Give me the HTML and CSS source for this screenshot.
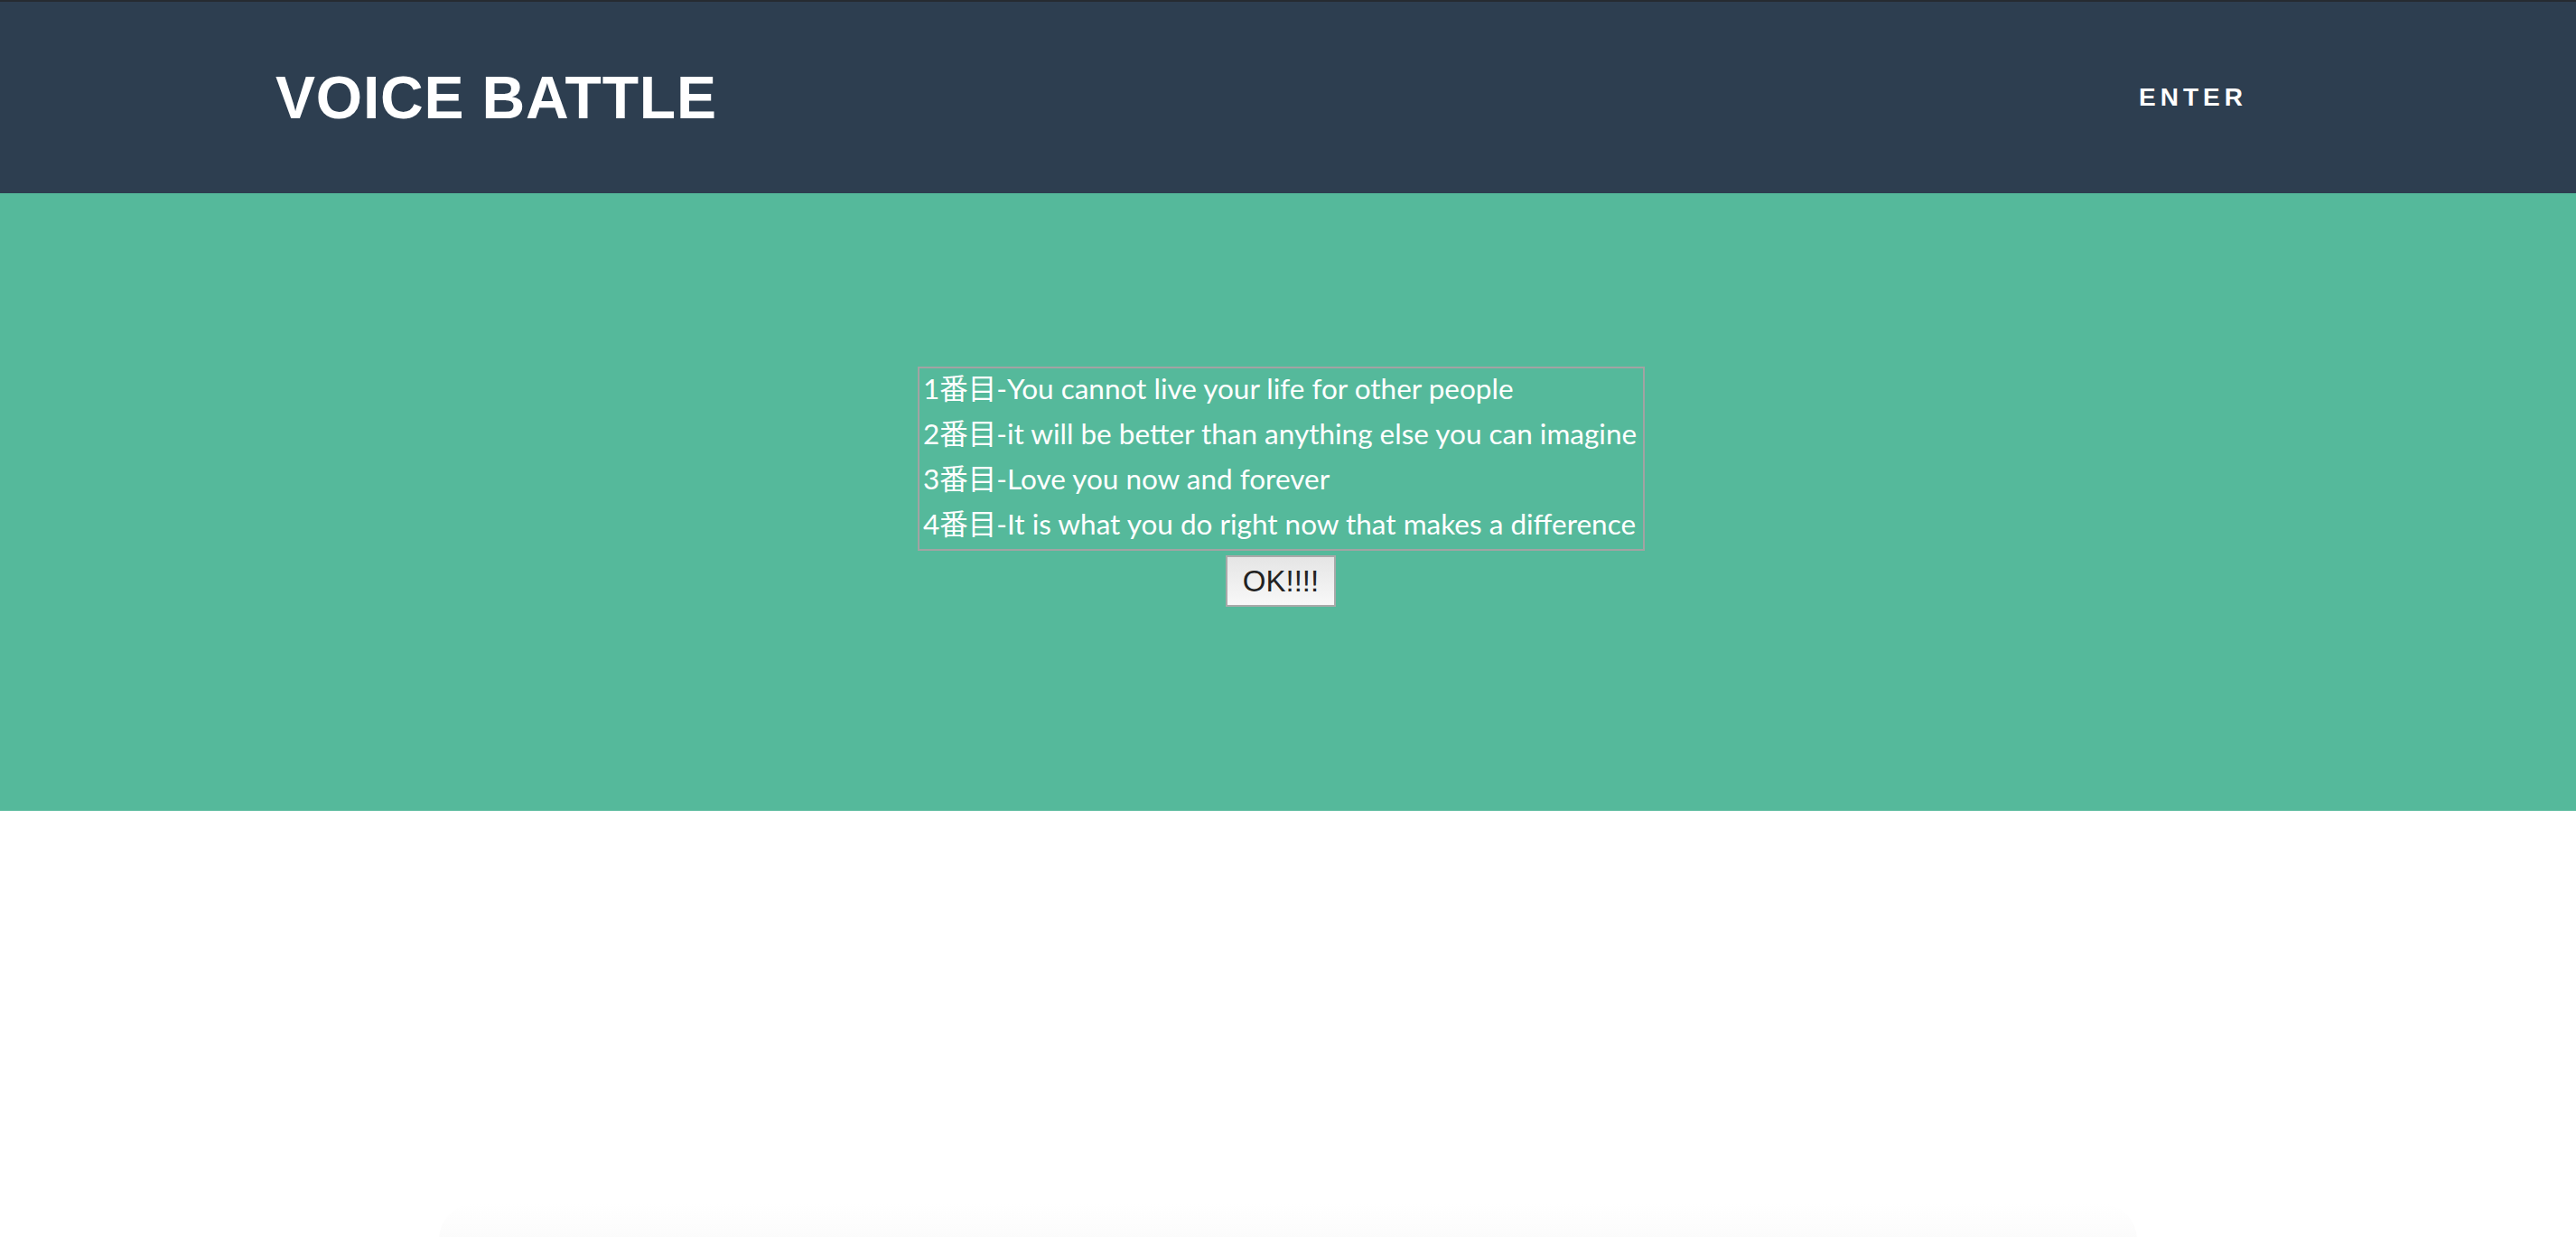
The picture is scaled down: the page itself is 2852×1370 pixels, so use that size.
FILE: index.html
```html
<!DOCTYPE html>
<html lang="ja">
<head>
<meta charset="utf-8">
<title>Voice Battle</title>
<link rel="stylesheet" href="styles.css">
</head>
<body>
<header class="topbar">
  <div class="topbar-inner">
    <a class="brand" href="#">VOICE BATTLE</a>
    <a class="nav-link" href="#">ENTER</a>
  </div>
</header>
<section class="hero">
  <div class="hero-inner">
    <div class="phrases">
      <div class="phrase">1番目-You cannot live your life for other people</div>
      <div class="phrase">2番目-it will be better than anything else you can imagine</div>
      <div class="phrase">3番目-Love you now and forever</div>
      <div class="phrase">4番目-It is what you do right now that makes a difference</div>
    </div>
    <div class="actions"><button class="ok-btn" type="button">OK!!!!</button></div>
  </div>
</section>
<div class="below"><div class="card-shadow"></div></div>
</body>
</html>
```
FILE: styles.css
```css
html, body {
  margin: 0;
  padding: 0;
  background: #ffffff;
  overflow: hidden;
}
body {
  font-family: "Lato", "Noto Sans CJK JP", sans-serif;
}
.topbar {
  background: #2d3e50;
  border-top: 2px solid #262b31;
  height: 212px;
}
.topbar-inner {
  height: 100%;
  display: flex;
  align-items: center;
  justify-content: space-between;
  padding: 0 364px 0 305px;
}
.brand {
  font-family: "Liberation Sans", "Noto Sans", sans-serif;
  font-weight: 700;
  font-size: 66px;
  letter-spacing: 0.8px;
  color: #ffffff;
  text-decoration: none;
  line-height: 1;
}
.nav-link {
  font-family: "Liberation Sans", "Noto Sans", sans-serif;
  font-weight: 700;
  font-size: 28px;
  letter-spacing: 5px;
  color: #ffffff;
  text-decoration: none;
  line-height: 1;
}
.hero {
  background: #55b99b;
  height: 684px;
  box-sizing: border-box;
  padding-top: 192px;
}
.hero-inner {
  width: 820px;
  margin: 0 auto;
}
.phrases {
  display: inline-block;
  border: 2px solid #a3a3a3;
  padding: 0 7px 3px 4px;
  color: #ffffff;
  font-size: 31.5px;
  line-height: 50px;
  font-family: "Lato", "Noto Sans CJK JP", sans-serif;
  white-space: nowrap;
}
.phrase:first-child {
  margin-top: -3px;
}
.actions {
  display: flex;
  justify-content: center;
  margin-top: 5px;
}
.ok-btn {
  font-family: "Liberation Sans", sans-serif;
  font-size: 33px;
  color: #222222;
  background: linear-gradient(to bottom, #e5e5e5, #f8f8f8);
  border: 2px solid #a9a9a9;
  border-radius: 0;
  padding: 0;
  width: 122px;
  height: 57px;
  line-height: 1;
  margin-right: 16px;
}
.below {
  height: 472px;
  display: flex;
  justify-content: center;
}
.card-shadow {
  width: 1880px;
  margin-top: 435px;
  height: 40px;
  border-radius: 60px 60px 0 0;
  background: linear-gradient(to bottom, #ffffff, #fbfbfb);
}
```
